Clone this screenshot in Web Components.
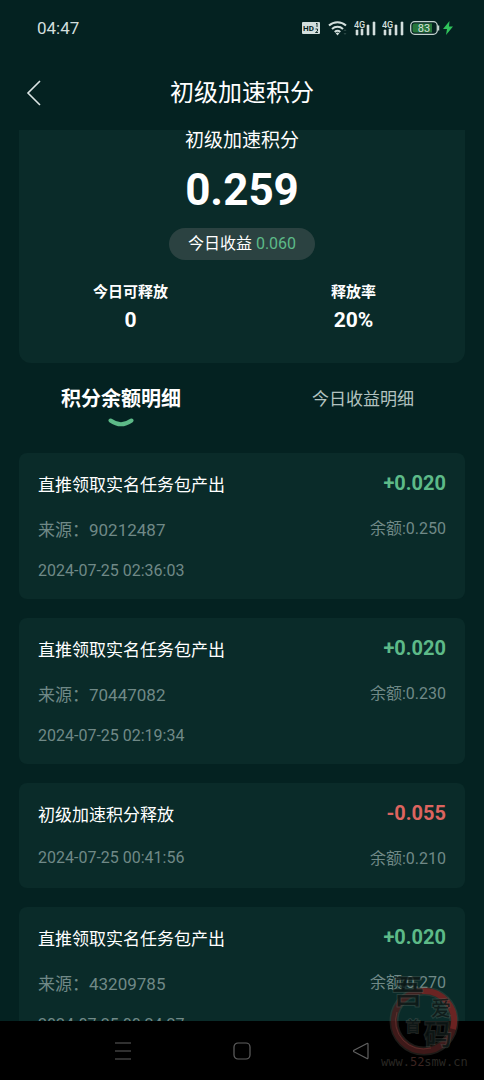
<!DOCTYPE html>
<html lang="zh-CN">
<head>
<meta charset="utf-8">
<meta name="viewport" content="width=device-width, initial-scale=1">
<title>初级加速积分</title>
<style>
  body {
    margin: 0;
    background: #042221;
    color: #fff;
    font-family: Roboto, "Noto Sans CJK SC", sans-serif;
  }
</style>
</head>
<body>
<points-app>
  <status-bar slot="top" time="04:47" battery="83"></status-bar>
  <page-header slot="top">初级加速积分</page-header>

  <points-summary total="0.259" income="0.060" releasable="0" rate="20%">初级加速积分</points-summary>
  <detail-tabs></detail-tabs>
  <record-list>
    <record-card amount="+0.020" balance="0.250" source="90212487" time="2024-07-25 02:36:03">直推领取实名任务包产出</record-card>
    <record-card amount="+0.020" balance="0.230" source="70447082" time="2024-07-25 02:19:34">直推领取实名任务包产出</record-card>
    <record-card amount="-0.055" balance="0.210" time="2024-07-25 00:41:56">初级加速积分释放</record-card>
    <record-card amount="+0.020" balance="0.270" source="43209785" time="2024-07-25 00:24:27">直推领取实名任务包产出</record-card>
  </record-list>

  <system-nav slot="bottom"></system-nav>
  <site-mark slot="bottom"></site-mark>
</points-app>

<script>
class PointsApp extends HTMLElement {
  constructor() {
    super();
    this.attachShadow({ mode: 'open' });
  }
  connectedCallback() {
    this.shadowRoot.innerHTML = `
      <style>
      :host {
        display: flex;
        flex-direction: column;
        height: 100vh;
        position: relative;
        overflow: hidden;
      }
      main {
        flex: 1;
        min-height: 0;
        overflow: hidden;
      }
      </style>
      <slot name="top"></slot>
      <main><slot></slot></main>
      <slot name="bottom"></slot>`;
  }
}

class StatusBar extends HTMLElement {
  constructor() {
    super();
    this.attachShadow({ mode: 'open' });
  }
  connectedCallback() {
    this.render();
  }
  renderSignal() {
    return `
      <svg width="22" height="16" viewBox="0 0 22 16">
        <text x="0" y="8" font-size="9" font-weight="500">4G</text>
        <path d="M2 10h2v5H2zM7 9h2v6H7zM13 5h2v10h-2zM19 2h2v13h-2z" stroke="#d3dfdd" stroke-width="0.6"/>
      </svg>`;
  }
  render() {
    this.shadowRoot.innerHTML = `
      <style>
      :host {
        display: flex;
        align-items: center;
        justify-content: space-between;
        height: 56px;
        padding: 0 31px 0 37px;
        color: #d3dfdd;
        font-size: 17px;
      }
      .icons {
        display: flex;
        align-items: center;
        gap: 6px;
      }
      .power {
        display: flex;
        align-items: center;
        gap: 3px;
      }
      svg {
        display: block;
        fill: #d3dfdd;
      }
      </style>
      <span>${this.getAttribute('time')}</span>
      <div class="icons">
        <svg width="18" height="12" viewBox="0 0 18 12">
          <rect width="18" height="12" rx="1"/>
          <text x="1" y="9" font-size="8" font-weight="700" fill="#042221">HD</text>
          <path d="M14 2l1-1v4M13.5 7h2v2l-2 1.5h2.5" fill="none" stroke="#042221" stroke-width="0.9"/>
        </svg>
        <svg width="22" height="16" viewBox="-2 0 22 16">
          <path d="M1 5.6a12.5 12.5 0 0 1 17 0M4 9a8 8 0 0 1 11 0M6.7 12a4.3 4.3 0 0 1 5.6 0" fill="none" stroke="#d3dfdd" stroke-width="2"/>
          <path d="M7.7 13.2a3 3 0 0 1 3.6 0L9.5 15.5z"/>
          <path d="M17 9l1.5 2h-3zM17 15l1.5-2h-3z" fill="#2a4644"/>
        </svg>
        ${this.renderSignal()}
        ${this.renderSignal()}
        <div class="power">
          <svg width="30" height="14" viewBox="0 0 30 14">
            <rect x="0.7" y="0.7" width="26.6" height="12.6" rx="4" fill="none" stroke="#c3d2cf" stroke-width="1.3"/>
            <path d="M4.5 2.5H22v9H4.5a2 2 0 0 1-2-2v-5a2 2 0 0 1 2-2z" fill="#25753a"/>
            <path d="M28.5 4.5v5" stroke="#c3d2cf" stroke-width="1.5"/>
            <text x="14" y="11" font-size="11" text-anchor="middle">${this.getAttribute('battery')}</text>
          </svg>
          <svg width="10" height="14" viewBox="0 0 10 14">
            <path d="M6.5 0L0 8h4l-1 6 7-8.5H6z" fill="#2fc25b"/>
          </svg>
        </div>
      </div>`;
  }
}

class PageHeader extends HTMLElement {
  constructor() {
    super();
    this.attachShadow({ mode: 'open' });
  }
  connectedCallback() {
    this.shadowRoot.innerHTML = `
      <style>
      :host {
        display: grid;
        grid-template-columns: 48px 1fr 48px;
        align-items: center;
        height: 74px;
      }
      button {
        border: 0;
        background: none;
        padding: 0 0 0 26px;
        cursor: pointer;
      }
      svg {
        display: block;
      }
      h1 {
        margin: 0;
        font-size: 24px;
        line-height: 32px;
        font-weight: 400;
        text-align: center;
      }
      </style>
      <button type="button" aria-label="返回">
        <svg width="16" height="26" viewBox="0 0 16 26" fill="none" stroke="#dce5e4" stroke-width="1.6">
          <path d="M14 1L2 13l12 12"/>
        </svg>
      </button>
      <h1><slot></slot></h1>`;
  }
}

class PointsSummary extends HTMLElement {
  constructor() {
    super();
    this.attachShadow({ mode: 'open' });
  }
  connectedCallback() {
    this.shadowRoot.innerHTML = `
      <style>
      :host {
        display: flex;
        flex-direction: column;
        align-items: center;
        margin: 0 19px;
        padding-bottom: 27px;
        background: #0a2b29;
        border-radius: 0 0 12px 12px;
      }
      h2 {
        margin: 0;
        font-size: 19px;
        line-height: 22px;
        font-weight: 400;
      }
      .total {
        font-size: 44px;
        line-height: 76px;
        font-weight: 700;
      }
      .income {
        padding: 0 19px;
        font-size: 16px;
        line-height: 32px;
        border-radius: 16px;
        background: #2b4241;
      }
      .income span {
        color: #5dba88;
      }
      dl {
        display: flex;
        align-self: stretch;
        margin: 20px 0 0;
        font-weight: 700;
        text-align: center;
      }
      dl div {
        flex: 1;
      }
      dt {
        font-size: 15px;
        line-height: 24px;
      }
      dd {
        margin: 0;
        font-size: 21px;
        line-height: 32px;
      }
      </style>
      <h2><slot></slot></h2>
      <div class="total">${this.getAttribute('total')}</div>
      <div class="income">今日收益 <span>${this.getAttribute('income')}</span></div>
      <dl>
        <div>
          <dt>今日可释放</dt>
          <dd>${this.getAttribute('releasable')}</dd>
        </div>
        <div>
          <dt>释放率</dt>
          <dd>${this.getAttribute('rate')}</dd>
        </div>
      </dl>`;
  }
}

class DetailTabs extends HTMLElement {
  constructor() {
    super();
    this.attachShadow({ mode: 'open' });
    this.tabs = ['积分余额明细', '今日收益明细'];
    this.current = 0;
  }
  connectedCallback() {
    this.render();
  }
  onSelectTab(index) {
    this.current = index;
    this.render();
  }
  render() {
    this.shadowRoot.innerHTML = `
      <style>
      :host {
        display: block;
        padding: 20px 0 25px;
      }
      [role=tablist] {
        display: grid;
        grid-template-columns: 1fr 1fr;
      }
      button {
        display: flex;
        flex-direction: column;
        align-items: center;
        gap: 3px;
        border: 0;
        padding: 0;
        background: none;
        color: #b3c2c0;
        font: inherit;
        font-size: 17px;
        line-height: 32px;
        cursor: pointer;
      }
      button[aria-selected=true] {
        color: #fff;
        font-size: 20px;
        font-weight: 700;
      }
      svg {
        display: none;
      }
      button[aria-selected=true] svg {
        display: block;
      }
      </style>
      <div role="tablist">
        ${this.tabs.map((tab, i) => `
          <button type="button" role="tab" aria-selected="${i === this.current}">
            ${tab}
            <svg width="26" height="10" viewBox="0 0 26 10" fill="none" stroke="#5dba88" stroke-width="4" stroke-linecap="round">
              <path d="M2.5 2.5Q13 10 23.5 2.5"/>
            </svg>
          </button>`).join('')}
      </div>`;
    const buttons = Array.from(this.shadowRoot.querySelectorAll('button'));
    buttons.forEach((btn, i) => btn.addEventListener('click', this.onSelectTab.bind(this, i)));
  }
}

class RecordList extends HTMLElement {
  constructor() {
    super();
    this.attachShadow({ mode: 'open' });
    this.shadowRoot.innerHTML = `
      <style>
      :host {
        display: flex;
        flex-direction: column;
        gap: 19px;
        padding: 0 19px 19px;
      }
      </style>
      <slot></slot>`;
  }
}

class RecordCard extends HTMLElement {
  constructor() {
    super();
    this.attachShadow({ mode: 'open' });
  }
  connectedCallback() {
    const amount = this.getAttribute('amount');
    const source = this.getAttribute('source');
    this.shadowRoot.innerHTML = `
      <style>
      :host {
        display: flex;
        justify-content: space-between;
        padding: 18px 19px;
        background: #0a2b29;
        border-radius: 8px;
        color: #708987;
      }
      .info, .money {
        display: flex;
        flex-direction: column;
        gap: 19px;
      }
      .money {
        gap: 23px;
        text-align: right;
      }
      h3 {
        margin: 0;
        font-size: 17px;
        line-height: 28px;
        font-weight: 400;
        color: #fff;
      }
      .source {
        font-size: 17px;
        line-height: 24px;
      }
      time {
        font-size: 16px;
        line-height: 20px;
      }
      .amount {
        font-size: 20px;
        line-height: 24px;
        font-weight: 700;
        color: #5dba88;
      }
      .amount.out {
        color: #dc645f;
      }
      .balance {
        font-size: 16px;
        line-height: 22px;
      }
      </style>
      <div class="info">
        <h3><slot></slot></h3>
        ${source ? `<div class="source">来源：${source}</div>` : ''}
        <time>${this.getAttribute('time')}</time>
      </div>
      <div class="money">
        <div class="amount ${amount.startsWith('-') ? 'out' : ''}">${amount}</div>
        <div class="balance">余额:${this.getAttribute('balance')}</div>
      </div>`;
  }
}

class SystemNav extends HTMLElement {
  constructor() {
    super();
    this.attachShadow({ mode: 'open' });
    this.shadowRoot.innerHTML = `
      <style>
      :host {
        display: grid;
        grid-template-columns: repeat(3, 1fr);
        height: 59px;
        padding: 0 13%;
        background: #000;
      }
      button {
        display: flex;
        align-items: center;
        justify-content: center;
        border: 0;
        padding: 0;
        background: none;
      }
      svg {
        fill: none;
        stroke: #606060;
        stroke-width: 1.2;
      }
      </style>
      <button type="button" aria-label="菜单">
        <svg width="18" height="18" viewBox="0 0 18 18"><path d="M1 1h16M1 9h16M1 17h16"/></svg>
      </button>
      <button type="button" aria-label="主页">
        <svg width="18" height="18" viewBox="0 0 18 18"><rect x="1" y="1" width="16" height="16" rx="4"/></svg>
      </button>
      <button type="button" aria-label="返回">
        <svg width="18" height="18" viewBox="0 0 18 18"><path d="M15 1.5Q16 1 16 2.5v13q0 1.5-1 1L2 9.8Q1 9 2 8.2z"/></svg>
      </button>`;
  }
}

// stamp laid over the lower right corner of the page
class SiteMark extends HTMLElement {
  constructor() {
    super();
    this.attachShadow({ mode: 'open' });
    this.shadowRoot.innerHTML = `
      <style>
      :host {
        display: block;
        position: absolute;
        right: 16px;
        bottom: 8px;
        pointer-events: none;
      }
      svg {
        display: block;
      }
      .name {
        font-family: "Noto Sans CJK SC", sans-serif;
        font-weight: 500;
        fill: #0a1413;
        fill-opacity: 0.8;
        stroke: #5d6660;
        stroke-opacity: 0.35;
        stroke-width: 2;
        paint-order: stroke;
      }
      .site {
        font-family: "DejaVu Sans Mono", monospace;
        font-size: 12px;
        fill: #2a2824;
      }
      .site tspan {
        fill: #3d2420;
      }
      </style>
      <svg width="88" height="104" viewBox="0 0 88 104">
        <g fill="none">
          <circle cx="44" cy="53" r="30" stroke="#5f5a50" stroke-opacity="0.3" stroke-width="9"/>
          <circle cx="44" cy="53" r="30" stroke="#4a1a19" stroke-opacity="0.75" stroke-width="6"/>
          <path d="M42 23a30 30 0 0 1 31 38" stroke="#7d2725" stroke-opacity="0.7" stroke-width="6"/>
          <path d="M17 44a28 28 0 0 0 34 36" stroke="#8a4a44" stroke-opacity="0.4" stroke-width="1"/>
        </g>
        <g class="name">
          <text x="12" y="35" font-size="32">吾</text>
          <text x="51" y="48" font-size="20">爱</text>
          <text x="26" y="63" font-size="14">首</text>
          <text x="44" y="77" font-size="28">码</text>
        </g>
        <text class="site" x="1" y="98">www.<tspan>52</tspan>smw.cn</text>
      </svg>`;
  }
}

window.customElements.define('points-app', PointsApp);
window.customElements.define('status-bar', StatusBar);
window.customElements.define('page-header', PageHeader);
window.customElements.define('points-summary', PointsSummary);
window.customElements.define('detail-tabs', DetailTabs);
window.customElements.define('record-list', RecordList);
window.customElements.define('record-card', RecordCard);
window.customElements.define('system-nav', SystemNav);
window.customElements.define('site-mark', SiteMark);
</script>
</body>
</html>
